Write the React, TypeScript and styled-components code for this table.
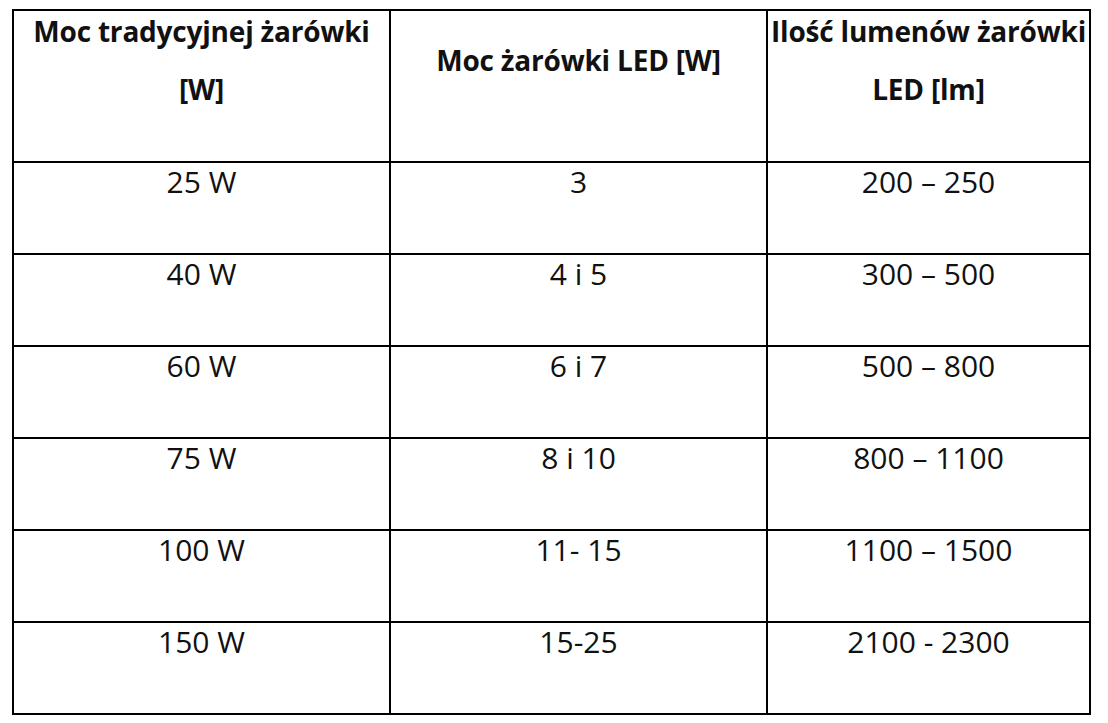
import React from 'react';
import styled, { createGlobalStyle } from 'styled-components';

const GlobalStyle = createGlobalStyle`
  html, body {
    margin: 0;
    padding: 0;
    background: #ffffff;
  }
  body {
    font-family: "Open Sans", "Noto Sans", Lato, sans-serif;
    color: #111111;
  }
`;

const Page = styled.div`
  padding: 9px 0 0 12px;
`;

// black background + 2px gaps draw the grid lines
const Table = styled.div`
  display: grid;
  grid-template-columns: 375px 375px 321px;
  grid-template-rows: 150px repeat(6, 90px);
  gap: 2px;
  padding: 2px;
  width: fit-content;
  background: #000000;
`;

const HeaderCell = styled.div`
  background: #ffffff;
  display: flex;
  align-items: center;
  justify-content: center;
  padding-bottom: 52px;
  font-size: 28px;
  font-weight: 700;
  line-height: 58px;
  letter-spacing: -0.2px;
  text-align: center;
  white-space: nowrap;
`;

const Cell = styled.div`
  background: #ffffff;
  padding-top: 2px;
  font-size: 30px;
  font-weight: 400;
  line-height: 34px;
  text-align: center;
  white-space: nowrap;
`;

const rows: [string, string, string][] = [
  ['25 W', '3', '200 – 250'],
  ['40 W', '4 i 5', '300 – 500'],
  ['60 W', '6 i 7', '500 – 800'],
  ['75 W', '8 i 10', '800 – 1100'],
  ['100 W', '11- 15', '1100 – 1500'],
  ['150 W', '15-25', '2100 - 2300'],
];

const App: React.FC = () => {
  return (
    <>
      <GlobalStyle />
      <Page>
        <Table>
          <HeaderCell>
            <span>Moc tradycyjnej żarówki<br />[W]</span>
          </HeaderCell>
          <HeaderCell>
            <span>Moc żarówki LED [W]</span>
          </HeaderCell>
          <HeaderCell>
            <span>Ilość lumenów żarówki<br />LED [lm]</span>
          </HeaderCell>
          {rows.map((row) =>
            row.map((value, i) => <Cell key={row[0] + i}>{value}</Cell>)
          )}
        </Table>
      </Page>
    </>
  );
};

export default App;
